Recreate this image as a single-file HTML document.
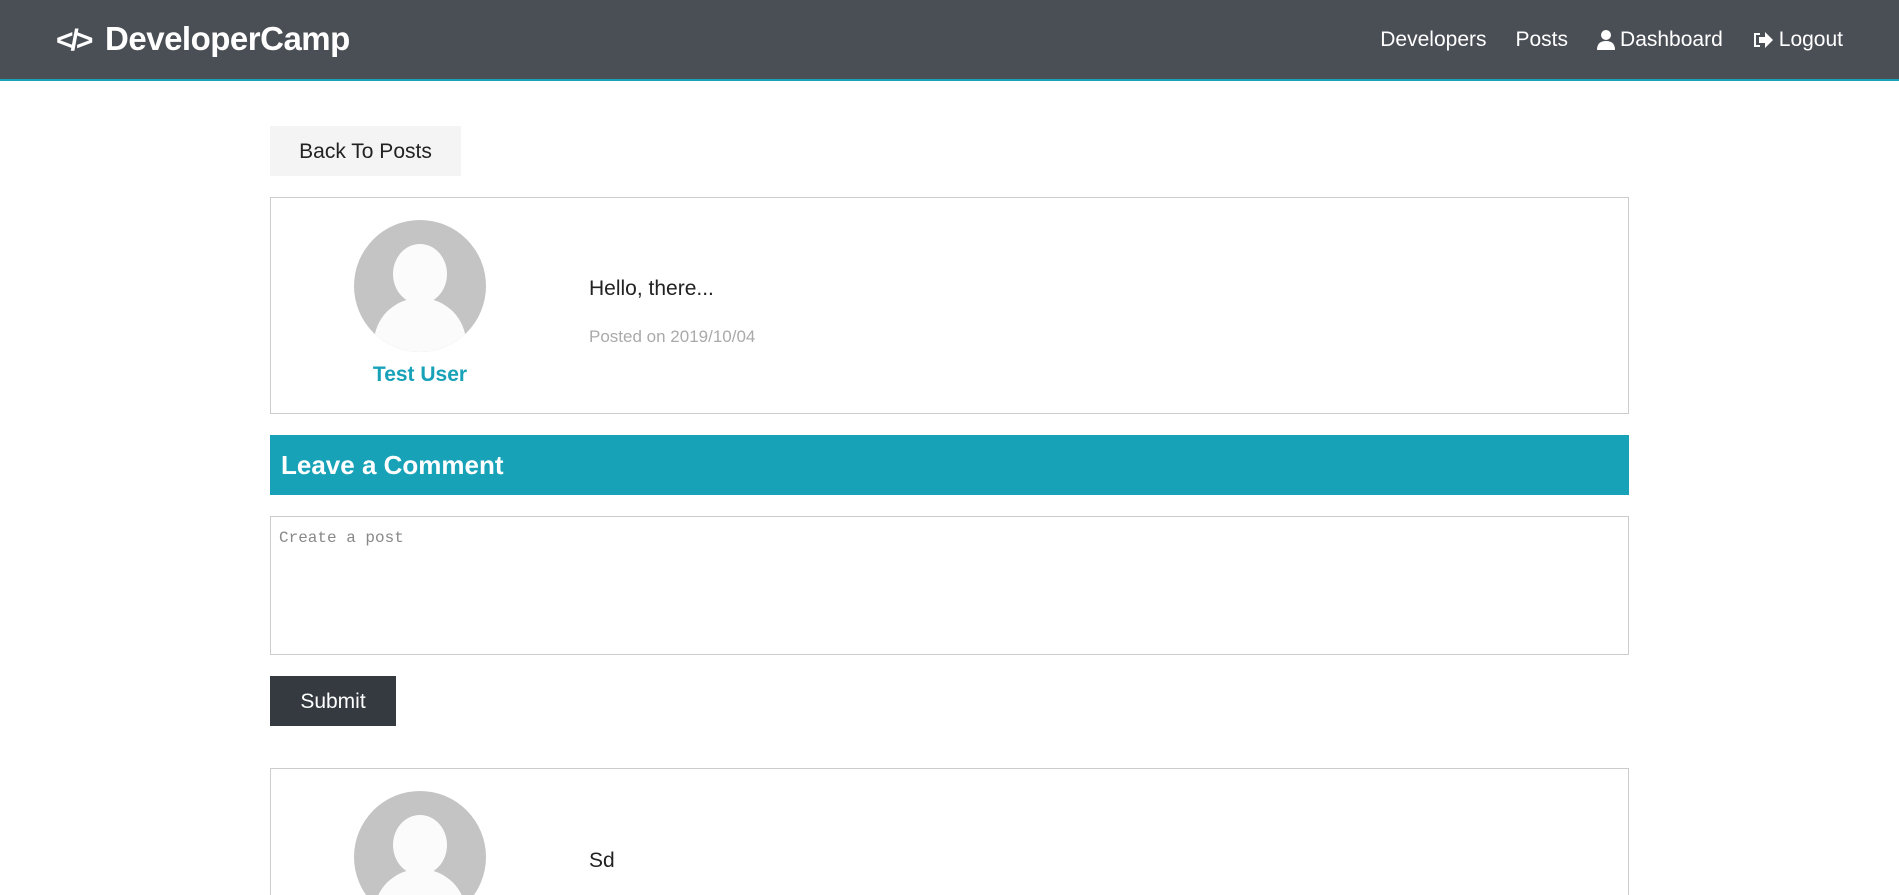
<!DOCTYPE html>
<html><head><meta charset="utf-8"><style>
*{box-sizing:border-box;margin:0;padding:0}
html,body{width:1899px;height:895px;overflow:hidden}
body{background:#fff;font-family:"Liberation Sans",sans-serif;color:#222;position:relative}
.nav{position:absolute;left:0;top:0;width:1899px;height:81px;background:#4a4e55;border-bottom:2px solid #17a2b8}
.logo{position:absolute;left:56px;top:20px;color:#fff;font-weight:bold;font-size:33px;letter-spacing:-0.5px}
.links{position:absolute;right:56px;top:28px;color:#fff;font-size:21px;display:flex;gap:29px;align-items:center}
.links span{display:flex;align-items:center;gap:5px}
.abs{position:absolute}
.card{position:absolute;left:270px;width:1359px;border:1px solid #ccc;background:#fff}
.av{position:absolute;width:132px;height:132px;border-radius:50%;background:#c4c4c4;overflow:hidden}
.av .h{position:absolute;left:39px;top:24px;width:54px;height:60px;border-radius:50%;background:#fbfbfb}
.av .b{position:absolute;left:20px;top:78px;width:92px;height:90px;border-radius:50%;background:#fbfbfb}
</style></head><body>
<div class="nav">
 <div class="logo"><span style="font-size:30px;margin-right:6px;letter-spacing:-3px">&lt;/&gt;</span> DeveloperCamp</div>
 <div class="links">
  <span>Developers</span><span>Posts</span>
  <span><svg width="18" height="20" viewBox="0 0 18 20"><circle cx="9" cy="5" r="5" fill="#fff"/><path d="M0 20 Q0 11 9 11 Q18 11 18 20Z" fill="#fff"/></svg>Dashboard</span>
  <span><svg width="22" height="18" viewBox="0 0 22 18"><path d="M2 2h6v2H4v10h4v2H2z" fill="#fff"/><path d="M7 6h6V1l8 8-8 8v-5H7z" fill="#fff"/></svg>Logout</span>
 </div>
</div>
<div class="abs" style="left:270px;top:126px;width:191px;height:50px;background:#f4f4f4;font-size:21px;line-height:52px;text-align:center;color:#222">Back To Posts</div>
<div class="card" style="top:197px;height:217px">
 <div class="av" style="left:83px;top:22px"><div class="h"></div><div class="b"></div></div>
 <div class="abs" style="left:0;width:298px;top:165px;text-align:center;color:#17a2b8;font-weight:bold;font-size:21px">Test User</div>
 <div class="abs" style="left:318px;top:79px;font-size:21px">Hello, there...</div>
 <div class="abs" style="left:318px;top:129px;font-size:17px;color:#aaa">Posted on 2019/10/04</div>
</div>
<div class="abs" style="left:270px;top:435px;width:1359px;height:60px;background:#17a2b8;color:#fff;font-weight:bold;font-size:26px;line-height:60px;padding-left:11px">Leave a Comment</div>
<div class="abs" style="left:270px;top:516px;width:1359px;height:139px;border:1px solid #ccc;padding:12px 8px;font-family:'Liberation Mono',monospace;font-size:16px;color:#888">Create a post</div>
<div class="abs" style="left:270px;top:676px;width:126px;height:50px;background:#343a40;color:#fff;font-size:21px;line-height:52px;text-align:center">Submit</div>
<div class="card" style="top:768px;height:300px">
 <div class="av" style="left:83px;top:22px"><div class="h"></div><div class="b"></div></div>
 <div class="abs" style="left:318px;top:80px;font-size:21px">Sd</div>
</div>
</body></html>
